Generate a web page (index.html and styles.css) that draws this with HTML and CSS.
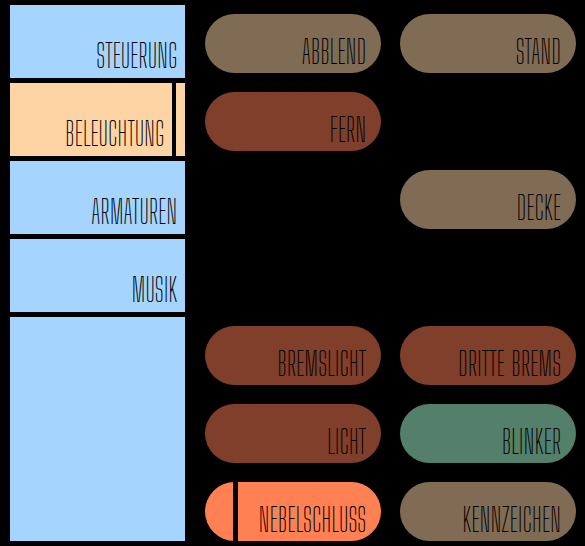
FILE: index.html
```html
<!DOCTYPE html>
<html lang="de">
<head>
<meta charset="utf-8">
<meta name="viewport" content="width=device-width, initial-scale=1">
<title>Beleuchtung</title>
<link rel="stylesheet" href="styles.css">
</head>
<body>
<div class="panel">
  <nav class="menu">
    <button class="menu-item" type="button">STEUERUNG</button>
    <button class="menu-item menu-item-active" type="button">BELEUCHTUNG</button>
    <button class="menu-item" type="button">ARMATUREN</button>
    <button class="menu-item" type="button">MUSIK</button>
    <div class="menu-fill"></div>
  </nav>
  <main class="switches">
    <button class="pill sand" type="button">ABBLEND</button>
    <button class="pill sand" type="button">STAND</button>
    <button class="pill rust" type="button">FERN</button>
    <span class="empty"></span>
    <span class="empty"></span>
    <button class="pill sand" type="button">DECKE</button>
    <span class="empty"></span>
    <span class="empty"></span>
    <button class="pill rust" type="button">BREMSLICHT</button>
    <button class="pill rust" type="button">DRITTE BREMS</button>
    <button class="pill rust" type="button">LICHT</button>
    <button class="pill green" type="button">BLINKER</button>
    <button class="pill pill-on" type="button">NEBELSCHLUSS</button>
    <button class="pill sand" type="button">KENNZEICHEN</button>
  </main>
</div>
</body>
</html>
```
FILE: styles.css
```css
* {
  box-sizing: border-box;
}

body {
  margin: 0;
  background: #000;
}

.panel {
  display: grid;
  grid-template-columns: repeat(3, 1fr);
  column-gap: 20px;
  padding: 5px 9px 5px 10px;
}

.menu {
  display: flex;
  flex-direction: column;
  gap: 5px;
}

.switches {
  grid-column: 2 / 4;
  display: grid;
  grid-template-columns: 1fr 1fr;
  grid-auto-rows: 59px;
  gap: 19px;
  padding-top: 9px;
}

.menu-item,
.pill {
  display: flex;
  justify-content: flex-end;
  align-items: flex-end;
  border: 0;
  color: #000;
  font: 250 32px/36px "Big Shoulders Display", "Antonio", "Liberation Sans", sans-serif;
  white-space: nowrap;
  cursor: pointer;
}

.menu-item {
  height: 73px;
  padding: 0 8px 4px;
  background: #a5d4ff;
}

.menu-item-active {
  padding-right: 21px;
  background: linear-gradient(to left, #ffd4a5 9px, #000 9px, #000 13px, #ffd4a5 13px);
}

.menu-fill {
  flex: 1;
  background: #a5d4ff;
}

.pill {
  padding: 0 15px 3px;
  border-radius: 30px;
}

.sand {
  background: #806b54;
}

.rust {
  background: #803f2a;
}

.green {
  background: #54806b;
}

.pill-on {
  background: linear-gradient(to right, #ff8052 28px, #000 28px, #000 33px, #ff8052 33px);
}
```
